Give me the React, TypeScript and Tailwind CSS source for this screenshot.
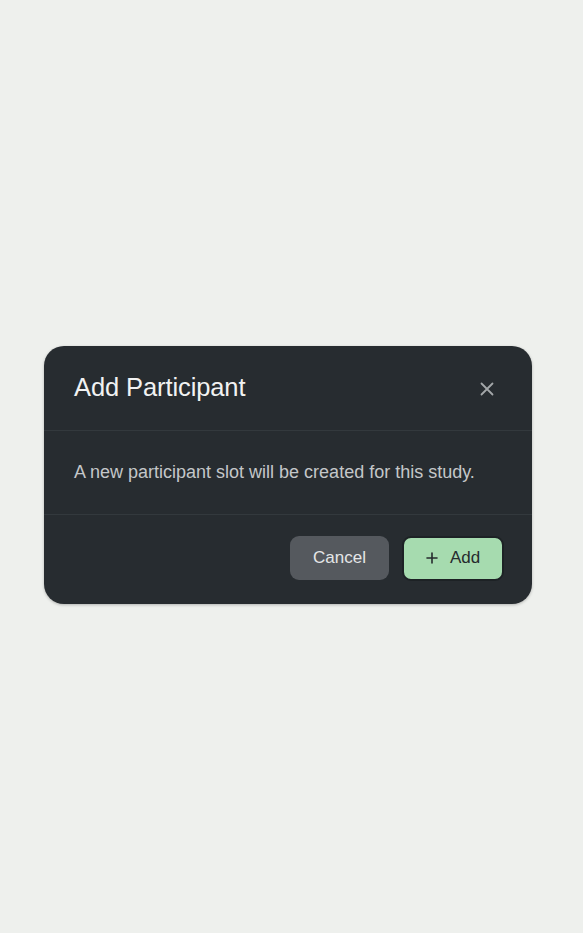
import React from 'react';

// ── Glyphs ─────────────────────────────────────────────────────────

function CloseIcon() {
  return (
    <svg width="16" height="16" viewBox="0 0 16 16" fill="none" stroke="currentColor" strokeWidth="1.8" strokeLinecap="round">
      <path d="M2.5 2.5l11 11M13.5 2.5l-11 11" />
    </svg>
  );
}

function PlusIcon() {
  return (
    <svg width="12" height="12" viewBox="0 0 12 12" fill="none" stroke="currentColor" strokeWidth="1.6" strokeLinecap="round">
      <path d="M6 1v10M1 6h10" />
    </svg>
  );
}

// ── Main component ─────────────────────────────────────────────────

export default function App() {
  return (
    <div
      className="min-h-screen w-full bg-[#eef0ed] flex items-center pl-[44px] pt-[16px]"
      style={{ fontFamily: '"Liberation Sans", Arial, sans-serif' }}
    >
      <div className="w-[488px] rounded-[20px] bg-[#272c30] shadow-[0_1px_3px_rgba(0,0,0,0.25)] overflow-hidden">
        {/* Header */}
        <div className="flex items-center justify-between h-[85px] pl-[30px] pr-[37px] border-b border-[#33393d]">
          <h2 className="text-[25.5px] text-[#f1f2f2] leading-none tracking-[-0.1px]">Add Participant</h2>
          <button className="text-[#a3a7a9] mt-[2px]">
            <CloseIcon />
          </button>
        </div>

        {/* Body */}
        <div className="flex items-center h-[84px] px-[30px] border-b border-[#33393d]">
          <p className="text-[18px] text-[#c4c7c9] leading-none">
            A new participant slot will be created for this study.
          </p>
        </div>

        {/* Footer */}
        <div className="flex items-center justify-end gap-[13px] h-[89px] pr-[28px] pb-[2px]">
          <button className="w-[99px] h-[44px] rounded-[9px] bg-[#55595e] text-[17px] text-[#e4e6e7]">
            Cancel
          </button>
          <button className="w-[102px] h-[45px] rounded-[9px] bg-[#a6dbaf] border-2 border-[#1d2225] flex items-center justify-center gap-[12px] text-[17px] text-[#262b2e]">
            <PlusIcon />
            Add
          </button>
        </div>
      </div>
    </div>
  );
}
